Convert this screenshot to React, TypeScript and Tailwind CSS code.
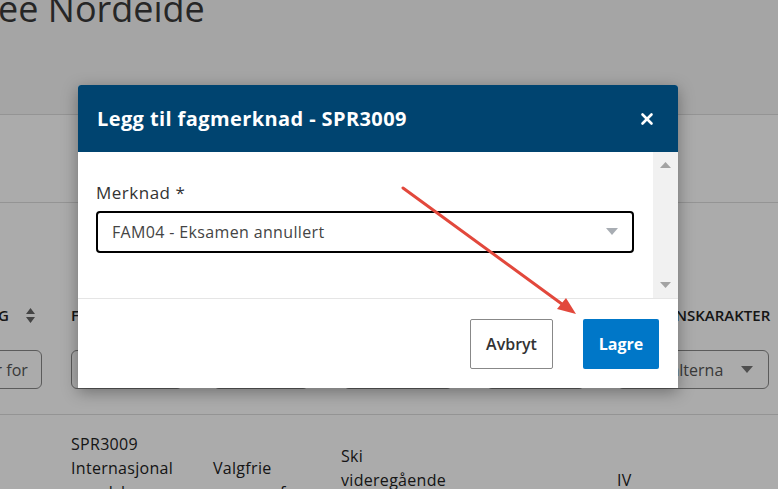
import { X } from 'lucide-react';

const font = { fontFamily: '"Open Sans", "Noto Sans", sans-serif' };

function Caret({ className = '' }: { className?: string }) {
  return (
    <svg width="12" height="7" viewBox="0 0 12 7" className={className}>
      <path d="M0 0h12L6 7z" fill="currentColor" />
    </svg>
  );
}

function SortIcon() {
  return (
    <svg width="9" height="15" viewBox="0 0 9 15" className="shrink-0 text-[#666]">
      <path d="M4.5 0L9 6H0z M4.5 15L0 9h9z" fill="currentColor" />
    </svg>
  );
}

const filterBox = 'h-[39px] rounded-md border border-[#888] bg-white';
const cols = 'grid grid-cols-[131px_142px_128px_143px_133px_161px]';

function Page() {
  return (
    <div className="min-h-[489px] bg-white text-[#222]">
      {/* Header */}
      <div className="h-[115px] overflow-hidden border-b border-[#ddd] bg-[#f7f7f7]">
        <h1 className="-mt-[15px] -ml-[2px] whitespace-nowrap text-[36px] font-normal leading-[48px] text-[#3a3a3a]">
          ee Nordeide
        </h1>
      </div>

      <div className="h-[88px] border-b border-[#ddd]" />

      {/* Table */}
      <div className={`-ml-[60px] ${cols} pt-[101px] text-[15px] font-semibold uppercase leading-[22px]`}>
        <div className="flex items-center justify-end gap-[17px] whitespace-nowrap pr-[36px]">
          <span className="shrink-0">Vurdering</span>
          <SortIcon />
        </div>
        <div>Fag</div>
        <div>Type</div>
        <div>Skole</div>
        <div>Nivå</div>
        <div className="whitespace-nowrap">Eksamenskarakter</div>
      </div>
      <div className={`-ml-[60px] ${cols} border-b border-[#ddd] pt-[24px] pb-[25px]`}>
        <div className={`${filterBox} w-[102px] overflow-hidden`}>
          <div className="whitespace-nowrap pl-[17px] pt-[7px] text-[16px] text-[#555]">Filtrer for</div>
        </div>
        <div className={`${filterBox} w-[112px]`} />
        <div className={`${filterBox} w-[96px]`} />
        <div className={`${filterBox} ml-[2px] w-[110px]`} />
        <div className={`${filterBox} ml-[2px] w-[99px]`} />
        <div className={`${filterBox} flex w-[152px] items-center justify-between pl-[17px] pr-[15px]`}>
          <span className="w-[88px] overflow-hidden whitespace-nowrap text-[16px] text-[#555]">Velg alternativ</span>
          <Caret className="text-[#777]" />
        </div>
      </div>
      <div className={`-ml-[60px] ${cols} items-center pt-[17px] text-[16px] leading-[24px] tracking-[0.3px]`}>
        <div />
        <div>
          SPR3009
          <br />
          Internasjonal
          <br />
          engelsk
          <br />1
        </div>
        <div>
          Valgfrie
          <br />
          programfag
        </div>
        <div>
          Ski
          <br />
          videregående
          <br />
          skole
        </div>
        <div />
        <div>IV</div>
      </div>
    </div>
  );
}

function Modal() {
  return (
    <div className="absolute left-[78px] top-[85px] w-[600px] overflow-hidden rounded-t-[3px] bg-white shadow-[0_4px_16px_rgba(0,0,0,0.35)]">
      <div className="flex h-[67px] items-center justify-between bg-[#004470] pl-[19px] pr-[22px]">
        <h2 className="text-[20px] font-bold tracking-[0.4px] text-white">Legg til fagmerknad - SPR3009</h2>
        <X className="h-[18px] w-[18px] text-white" strokeWidth={3.5} />
      </div>
      <div className="flex h-[147px] border-b border-[#e5e5e5]">
        <div className="flex-1 pl-[18px] pr-[19px] pt-[28px]">
          <label className="block text-[17px] font-medium tracking-[0.5px] text-[#333]">Merknad *</label>
          <div className="mt-[5px] flex h-[42px] items-center justify-between rounded-[4px] border-2 border-black pl-[14px] pr-[14px]">
            <span className="text-[16px] tracking-[0.35px] text-[#444]">FAM04 - Eksamen annullert</span>
            <Caret className="text-[#a8adb3]" />
          </div>
        </div>
        <div className="flex w-[25px] flex-col items-center justify-between bg-[#f1f1f1] py-[10px]">
          <svg width="11" height="6" viewBox="0 0 11 6" className="text-[#a3a3a3]">
            <path d="M5.5 0L11 6H0z" fill="currentColor" />
          </svg>
          <svg width="11" height="6" viewBox="0 0 11 6" className="text-[#a3a3a3]">
            <path d="M0 0h11L5.5 6z" fill="currentColor" />
          </svg>
        </div>
      </div>
      <div className="flex h-[89px] items-center justify-end gap-[30px] pr-[19px]">
        <button className="h-[50px] w-[83px] rounded-[2px] border border-[#888] bg-white text-[16px] font-semibold text-[#333]">
          Avbryt
        </button>
        <button className="h-[50px] w-[76px] rounded-[2px] bg-[#0077c8] text-[16px] font-bold text-white">
          Lagre
        </button>
      </div>
    </div>
  );
}

export default function App() {
  return (
    <div className="relative h-[489px] w-[778px] overflow-hidden" style={font}>
      <Page />
      <div className="absolute inset-0 bg-black/[0.33]" />
      <Modal />
      {/* Annotation arrow */}
      <svg className="pointer-events-none absolute left-0 top-0" width="778" height="489">
        <line x1="403" y1="188" x2="566" y2="307" stroke="#e2483c" strokeWidth="3" strokeLinecap="round" />
        <path d="M576 314L557 309L566 298z" fill="#e2483c" />
      </svg>
    </div>
  );
}
